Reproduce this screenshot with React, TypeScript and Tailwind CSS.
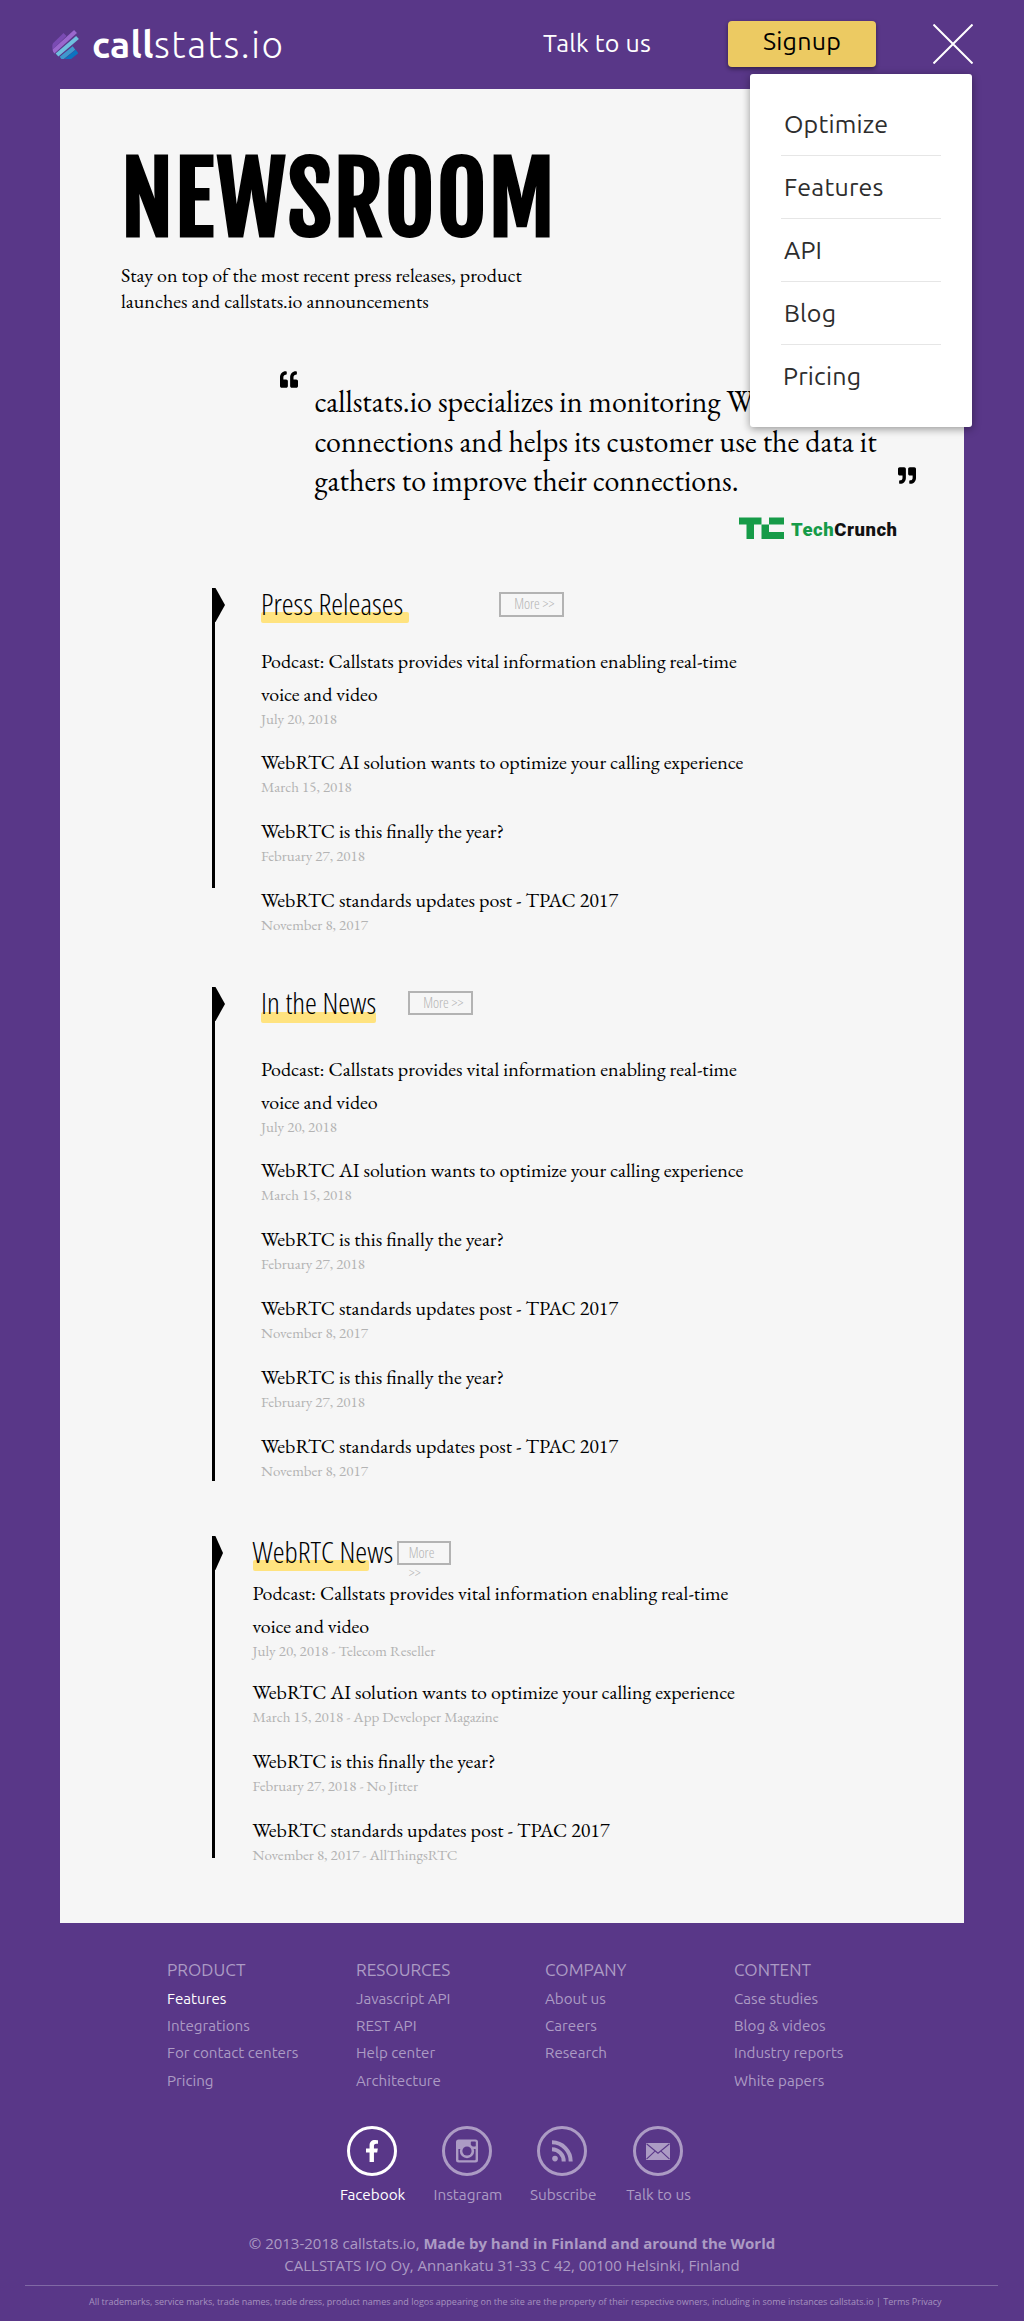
import React from 'react';
import { FaFacebookF, FaQuoteLeft, FaQuoteRight } from 'react-icons/fa';

type NewsItem = { title: string; meta: string };

const podcast = 'Podcast: Callstats provides vital information enabling real-time voice and video';
const solution = 'WebRTC AI solution wants to optimize your calling experience';
const year = 'WebRTC is this finally the year?';
const standards = 'WebRTC standards updates post - TPAC 2017';

const pressReleases: NewsItem[] = [
  { title: podcast, meta: 'July 20, 2018' },
  { title: solution, meta: 'March 15, 2018' },
  { title: year, meta: 'February 27, 2018' },
  { title: standards, meta: 'November 8, 2017' },
];

const inTheNews: NewsItem[] = [
  ...pressReleases,
  { title: year, meta: 'February 27, 2018' },
  { title: standards, meta: 'November 8, 2017' },
];

const webrtcNews: NewsItem[] = [
  { title: podcast, meta: 'July 20, 2018 - Telecom Reseller' },
  { title: solution, meta: 'March 15, 2018 - App Developer Magazine' },
  { title: year, meta: 'February 27, 2018 - No Jitter' },
  { title: standards, meta: 'November 8, 2017 - AllThingsRTC' },
];

const menu = ['Optimize', 'Features', 'API', 'Blog', 'Pricing'];

const footerColumns = [
  { title: 'PRODUCT', links: ['Features', 'Integrations', 'For contact centers', 'Pricing'] },
  { title: 'RESOURCES', links: ['Javascript API', 'REST API', 'Help center', 'Architecture'] },
  { title: 'COMPANY', links: ['About us', 'Careers', 'Research'] },
  { title: 'CONTENT', links: ['Case studies', 'Blog & videos', 'Industry reports', 'White papers'] },
];

function LogoMark() {
  return (
    <svg className="h-[30px] w-[28px]" viewBox="52 29 28 30">
      <defs>
        <clipPath id="logo-disc">
          <path d="M52 29H80V51.5L76 57A14 14 0 0 1 52.6 44Z" />
        </clipPath>
      </defs>
      <g clipPath="url(#logo-disc)" strokeWidth="4.2" fill="none">
        <path d="M50.5 48.5L65 34.5" stroke="#7a4bb3" />
        <path d="M53 52L75.5 31.5" stroke="#9a67cd" />
        <path d="M57 55L77.5 37.5" stroke="#6fc0df" />
        <path d="M61 58.5L74 48" stroke="#3f98cd" />
        <path d="M66 60.5L77 51.5" stroke="#0b74c0" />
      </g>
    </svg>
  );
}

function Header() {
  return (
    <header className="flex h-[89px] items-start font-['Ubuntu','Open_Sans',sans-serif] text-white">
      <div className="flex w-[543px] pl-[52px] pt-[29px]">
        <LogoMark />
        <div className="ml-[12px] mt-[-3px] h-[38px] whitespace-nowrap text-[37px] leading-[38px]">
          <span className="font-bold tracking-[0.5px]">call</span>
          <span className="font-light tracking-[1.6px]">stats.io</span>
        </div>
      </div>
      <a className="mt-[27px] w-[185px] whitespace-nowrap text-[25px] leading-[32px] tracking-[0.2px]">Talk to us</a>
      <button className="mt-[21px] h-[46px] w-[148px] rounded-[4px] bg-[#ecca62] pb-[7px] text-[25px] leading-[32px] tracking-[0.2px] text-black shadow-[0_2px_4px_rgba(0,0,0,0.45)]">
        Signup
      </button>
      <svg className="ml-[57px] mt-[24px] size-10" viewBox="0 0 40 40" stroke="white" strokeWidth="2">
        <path d="M0.5 0.5L39.5 39.5M39.5 0.5L0.5 39.5" />
      </svg>
    </header>
  );
}

function Menu() {
  return (
    <nav className="absolute left-[750px] top-[74px] z-10 h-[353px] w-[222px] rounded-[3px] bg-white pl-[31px] pt-[19px] font-['Ubuntu','Open_Sans',sans-serif] text-[25px] tracking-[0.2px] text-[#2d2d2d] shadow-[0_2px_8px_rgba(0,0,0,0.4)]">
      {menu.map((label, i) => (
        <div
          key={label}
          className={`flex h-[63px] w-[160px] items-center ${i < menu.length - 1 ? 'border-b border-[#e6e6e6] pl-[3px] pt-[2px]' : 'pl-[2px]'}`}
        >
          {label}
        </div>
      ))}
    </nav>
  );
}

function Quote() {
  return (
    <>
      <blockquote className="mt-[57px] flex h-[146px] pl-[220px]">
        <FaQuoteLeft className="-mt-px h-[19px] w-[18px] shrink-0" preserveAspectRatio="none" />
        <p className="ml-[16.5px] mt-[11px] w-[583.5px] whitespace-nowrap text-[30px] leading-[39.5px]">
          callstats.io specializes in monitoring WebRTC
          <br />
          connections and helps its customer use the data it
          <br />
          gathers to improve their connections.
        </p>
        <FaQuoteRight className="mt-[95px] h-[19px] w-[18px] shrink-0" preserveAspectRatio="none" />
      </blockquote>
      <div className="ml-[679px] flex h-[71px] items-start">
        <svg className="h-[23px] w-[45px]" viewBox="0 0 45 23" fill="#169b48">
          <path d="M0 0.5H22.5V7.5H15V22H7.5V7.5H0Z" />
          <path d="M30 0.5H45V7.5H30Z" />
          <path d="M22.5 7.5H30V15H45V22H22.5Z" />
        </svg>
        <span className="ml-[7px] mt-px whitespace-nowrap font-['Roboto',sans-serif] text-[18.5px] leading-[24px] font-black tracking-[0.55px] text-[#111]">
          <span className="text-[#169b48]">Tech</span>Crunch
        </span>
      </div>
    </>
  );
}

type SectionProps = {
  title: string;
  items: NewsItem[];
  className: string;
  barClass: string;
  tipClass: string;
  bodyClass: string;
  markClass: string;
  moreClass: string;
  listClass: string;
};

function Section({ title, items, className, barClass, tipClass, bodyClass, markClass, moreClass, listClass }: SectionProps) {
  return (
    <section className={`ml-[152px] flex items-start ${className}`}>
      <div className={`w-[3px] bg-black ${barClass}`} />
      <svg className={`h-[34px] ${tipClass}`} viewBox="0 0 10 34" preserveAspectRatio="none">
        <path d="M0 0H0.5L10 17L0.5 34H0Z" />
      </svg>
      <div className={bodyClass}>
        <div className="flex h-[30px] items-start font-['Open_Sans',sans-serif] font-light [font-stretch:75%]">
          <h2 className="relative z-0 whitespace-nowrap pt-px text-[30px] leading-[30px]">
            <span className={`absolute left-0 -z-10 h-[11px] rounded-[2px] bg-[#ffe37f] ${markClass}`} />
            {title}
          </h2>
          <a className={`border-2 border-[#b3b3b3] text-[14.5px] leading-[20px] text-[#b3b3b3] ${moreClass}`}>More &gt;&gt;</a>
        </div>
        <ul className={listClass}>
          {items.map((item, i) => (
            <li key={i} className="mb-[20px]">
              <h3 className="text-[20px] leading-[33px]">{item.title}</h3>
              <p className="text-[15px] leading-[16px] text-[#b3b3b3]">{item.meta}</p>
            </li>
          ))}
        </ul>
      </div>
    </section>
  );
}

function Social({ label, active, children }: { label: string; active?: boolean; children: React.ReactNode }) {
  return (
    <div className={`flex w-[95.3px] flex-col items-center ${active ? 'text-white' : 'text-[#ac9bc4]'}`}>
      <div className="flex size-[50px] items-center justify-center rounded-full border-[3px] border-current">{children}</div>
      <span className="ml-[2px] mt-[9px] text-[15.3px] leading-[20px]">{label}</span>
    </div>
  );
}

function Footer() {
  return (
    <footer className="font-['Ubuntu','Open_Sans',sans-serif] text-[#ac9bc4]">
      <div className="grid h-[203px] grid-cols-[repeat(4,189px)] pl-[167px] pt-[36px]">
        {footerColumns.map((col, i) => (
          <div key={col.title}>
            <h4 className="text-[17.2px] leading-[22px]">{col.title}</h4>
            <ul className="mt-[4px]">
              {col.links.map((link, j) => (
                <li key={link} className={`text-[15.15px] leading-[27.2px] ${i === 0 && j === 0 ? 'text-white' : ''}`}>
                  {link}
                </li>
              ))}
            </ul>
          </div>
        ))}
      </div>
      <div className="flex pl-[324px]">
        <Social label="Facebook" active>
          <FaFacebookF className="h-[22px] w-[14px]" preserveAspectRatio="none" />
        </Social>
        <Social label="Instagram">
          <svg className="size-[24px]" viewBox="0 0 24 24">
            <rect x="1" y="0.5" width="22" height="23" rx="2.5" fill="currentColor" />
            <rect x="15.8" y="2.6" width="5" height="5" rx="0.8" fill="#593788" />
            <path d="M3.4 10H6.2A6 6 0 1 0 17.8 10H20.6V20.4A0.8 0.8 0 0 1 19.8 21.2H4.2A0.8 0.8 0 0 1 3.4 20.4Z" fill="#593788" />
            <circle cx="12" cy="12" r="7.2" fill="currentColor" />
            <circle cx="12" cy="12" r="4.6" fill="#593788" />
          </svg>
        </Social>
        <Social label="Subscribe">
          <svg className="size-[22px]" viewBox="0 0 22 22" fill="none" stroke="currentColor" strokeWidth="4">
            <circle cx="4" cy="18.6" r="2.8" fill="currentColor" stroke="none" />
            <path d="M1 9.3A12 12 0 0 1 12.7 21.5M1 2.3A19 19 0 0 1 19.7 21.5" />
          </svg>
        </Social>
        <Social label="Talk to us">
          <svg className="h-[17px] w-[24px]" viewBox="0 0 24 17">
            <rect width="24" height="17" fill="currentColor" />
            <path d="M0.5 0.8L12 10.2L23.5 0.8M0.5 16.2L9 8.2M23.5 16.2L15 8.2" fill="none" stroke="#593788" strokeWidth="1.1" />
          </svg>
        </Social>
      </div>
      <div className="mt-[27px] text-center font-['Open_Sans',sans-serif] text-[15px] leading-[22px]">
        <p>
          © 2013-2018 callstats.io, <b className="font-bold">Made by hand in Finland and around the World</b>
        </p>
        <p>CALLSTATS I/O Oy, Annankatu 31-33 C 42, 00100 Helsinki, Finland</p>
      </div>
      <div className="ml-[25px] mt-[9px] h-px w-[973px] bg-[#8069a5]" />
      <p className="ml-[89px] mt-[9px] whitespace-nowrap font-['Open_Sans',sans-serif] text-[9px] leading-[13px] text-[#a592bf]">
        All trademarks, service marks, trade names, trade dress, product names and logos appearing on the site are the
        property of their respective owners, including in some instances callstats.io | Terms Privacy
      </p>
    </footer>
  );
}

export default function App() {
  return (
    <div className="relative h-[2321px] w-[1024px] overflow-hidden bg-[#593788]">
      <Header />
      <Menu />
      <main className="ml-[60px] h-[1834px] w-[904px] bg-[#f6f6f6] pt-[61px] font-['EB_Garamond','Liberation_Serif',serif] text-black">
        <h1 className="ml-[61px] whitespace-nowrap font-['Fjalla_One','Open_Sans',sans-serif] text-[96px] leading-[100px] font-bold tracking-[1.7px]">
          NEWSROOM
        </h1>
        <p className="ml-[61px] mt-[12px] w-[420px] text-[20px] leading-[26px]">
          Stay on top of the most recent press releases, product launches and callstats.io announcements
        </p>
        <Quote />
        <Section
          title="Press Releases"
          items={pressReleases}
          className="h-[399px]"
          barClass="h-[300px]"
          tipClass="w-[10px]"
          bodyClass="ml-[36px]"
          markClass="top-[24px] w-[148px]"
          moreClass="ml-[96px] mt-[4px] h-[25px] w-[65px] pl-[13px]"
          listClass="mt-[27px] w-[500px] [&>li:first-child]:mb-[19px]"
        />
        <Section
          title="In the News"
          items={inTheNews}
          className="h-[549px]"
          barClass="h-[494px]"
          tipClass="w-[10px]"
          bodyClass="ml-[36px]"
          markClass="top-[25px] w-[115px]"
          moreClass="ml-[32px] mt-[4px] h-[24px] w-[65px] pl-[13px]"
          listClass="mt-[36px] w-[500px] [&>li:first-child]:mb-[19px]"
        />
        <Section
          title="WebRTC News"
          items={webrtcNews}
          className="h-[387px]"
          barClass="h-[322px]"
          tipClass="w-[8px]"
          bodyClass="ml-[29.5px]"
          markClass="top-[24px] w-[116px]"
          moreClass="ml-[3.5px] mt-[5px] h-[24px] w-[54px] px-[10px]"
          listClass="mt-[11px] w-[500px] [&>li:first-child]:mb-[17px]"
        />
      </main>
      <Footer />
    </div>
  );
}
